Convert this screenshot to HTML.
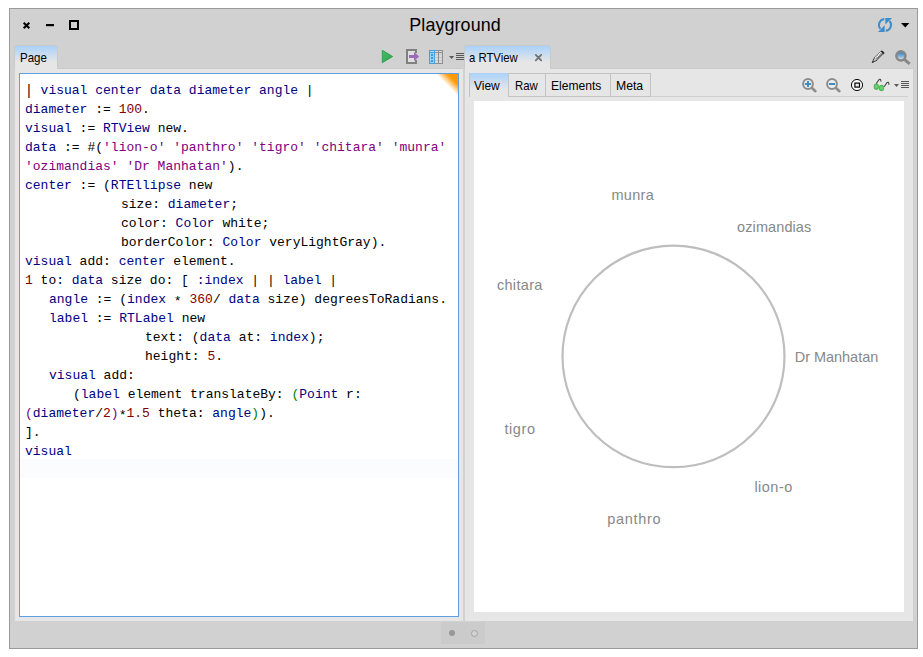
<!DOCTYPE html>
<html lang="en">
<head>
<meta charset="utf-8">
<title>Playground</title>
<style>
html,body{margin:0;padding:0;background:#fff;}
body{width:923px;height:657px;position:relative;overflow:hidden;font-family:"Liberation Sans",sans-serif;color:#000;}
.abs{position:absolute;}
#win{left:9px;top:8px;width:907px;height:639px;border:1px solid #9a9a9a;background:#d1d1d1;}
/* all children positioned in page coordinates via #stage */
#stage{position:absolute;left:0;top:0;width:923px;height:657px;}
.t{position:absolute;white-space:pre;line-height:1;transform-origin:0 0;}
#title{left:409.3px;top:14.5px;font-size:17.9px;line-height:20px;letter-spacing:0.1px;}
.tab{position:absolute;background:linear-gradient(#aad2fb 0%,#e6e6e6 70%);box-shadow:-1px 0 0 #c9c9c9,1px 0 0 #c9c9c9,0 -1px 0 #c9c9c9;}
.panel{position:absolute;background:#e6e6e6;}
.ui{font-size:13px;}
#editor{position:absolute;left:19px;top:73px;width:438px;height:542px;border:1px solid #5f9fdf;background:#fff;overflow:hidden;}
#code{position:absolute;left:5px;top:6.7px;margin:0;font-family:"Liberation Mono",monospace;font-size:13px;line-height:19px;white-space:pre;color:#000;}
#code div{height:19px;}
.tb{display:inline-block;width:24px;}
.v{color:#000080;}
.n{color:#800000;}
.s{color:#800080;}
.g{color:#008000;}
.m{color:#800080;}
.c0{color:#8a3a1c;}
.st{position:relative;top:2.5px;}
.itab{position:absolute;top:73px;height:24px;box-sizing:border-box;border:1px solid #c3c3c3;border-left:none;background:#e6e6e6;}
.lbl{position:absolute;font-size:14.5px;line-height:16px;color:#888888;white-space:pre;}
</style>
</head>
<body>
<div id="win" class="abs"></div>
<div id="stage">

<!-- title bar icons -->
<svg class="abs" style="left:20px;top:18px" width="64" height="16" viewBox="20 18 64 16">
  <path d="M23.7 22.7 L29.3 28.3 M29.3 22.7 L23.7 28.3" stroke="#000" stroke-width="2.1" stroke-linecap="butt" fill="none"/>
  <rect x="46" y="24" width="8" height="2.2" fill="#000"/>
  <rect x="70" y="21" width="8" height="8" fill="none" stroke="#000" stroke-width="2"/>
</svg>
<div id="title" class="t">Playground</div>

<!-- refresh + dropdown -->
<svg class="abs" style="left:874px;top:14px" width="40" height="22" viewBox="874 14 40 22">
  <g fill="none" stroke="#3d8ecb" stroke-width="2">
    <path d="M884.3 18.95 A6 6 0 0 0 880.4 28.8"/>
    <path d="M885.7 30.85 A6 6 0 0 0 889.6 21"/>
  </g>
  <path d="M878 31.9 L884.7 31.9 L884.7 25.2 Z" fill="#3d8ecb"/>
  <path d="M892 17.9 L885.3 17.9 L885.3 24.6 Z" fill="#3d8ecb"/>
  <path d="M901 23 L909.4 23 L905.2 27.4 Z" fill="#000"/>
</svg>

<!-- left tab + panel -->
<div class="tab" style="left:15px;top:46px;width:42px;height:23px;"></div>
<div class="t ui" id="tPage" style="left:20.3px;top:50.9px;transform:scaleX(0.885);">Page</div>
<div class="panel" style="left:15px;top:69px;width:448px;height:552px;"></div>
<div class="abs" style="left:58px;top:68px;width:405px;height:1px;background:#c9c9c9;"></div>

<!-- toolbar icons (left) -->
<svg class="abs" style="left:378px;top:46px" width="88" height="22" viewBox="378 46 88 22">
  <defs>
    <linearGradient id="gr" x1="0" y1="0" x2="1" y2="1"><stop offset="0" stop-color="#4cbb6a"/><stop offset="1" stop-color="#2aa548"/></linearGradient>
  </defs>
  <path d="M382.3 50.3 L392.6 56.5 L382.3 62.7 Z" fill="url(#gr)" stroke="#24a045" stroke-width="0.9" stroke-linejoin="round"/>
  <!-- export icon -->
  <rect x="408" y="51" width="7" height="11" fill="#dfdfdf"/>
  <path d="M416 53 L416 50 L407 50 L407 63 L416 63 L416 60" fill="none" stroke="#808080" stroke-width="2"/>
  <path d="M409 55 L414 55 L414 52 L419.2 56.5 L414 61 L414 58 L409 58 Z" fill="#9d6aba"/>
  <!-- table icon -->
  <g shape-rendering="crispEdges">
  <rect x="434" y="50" width="9" height="14" fill="#8e8e8e"/>
  <rect x="435" y="51" width="3" height="1" fill="#dedede"/>
  <rect x="439" y="51" width="3" height="1" fill="#dedede"/>
  <rect x="435" y="53" width="3" height="10" fill="#d9d9d9"/>
  <rect x="439" y="53" width="3" height="10" fill="#d9d9d9"/>
  <rect x="435" y="54" width="3" height="1" fill="#c6c6c6"/><rect x="439" y="54" width="3" height="1" fill="#c6c6c6"/>
  <rect x="435" y="57" width="3" height="1" fill="#c6c6c6"/><rect x="439" y="57" width="3" height="1" fill="#c6c6c6"/>
  <rect x="435" y="60" width="3" height="1" fill="#c6c6c6"/><rect x="439" y="60" width="3" height="1" fill="#c6c6c6"/>
  <rect x="429" y="50" width="6" height="14" fill="#4c9fd9"/>
  <rect x="430" y="51" width="4" height="1" fill="#a8dcff"/>
  <rect x="430" y="53" width="4" height="10" fill="#8fd2ff"/>
  <rect x="431" y="54" width="2" height="2" fill="#429ad5"/>
  <rect x="431" y="57" width="2" height="2" fill="#429ad5"/>
  <rect x="431" y="60" width="2" height="2" fill="#429ad5"/>
  </g>
  <!-- menu -->
  <path d="M449 56 L454.2 56 L451.6 59 Z" fill="#5a5a5a"/>
  <path d="M456 53.5 H464 M456 55.5 H464 M456 57.5 H464 M456 59.5 H464" stroke="#555" stroke-width="1" fill="none"/>
</svg>

<!-- right tab + panel -->
<div class="tab" style="left:465px;top:46px;width:85px;height:23px;"></div>
<div class="t ui" id="tRT" style="left:468.9px;top:50.9px;transform:scaleX(0.871);">a RTView</div>
<svg class="abs" style="left:533px;top:52px" width="12" height="12" viewBox="533 52 12 12">
  <path d="M535.8 54.9 L541.2 60.3 M541.2 54.9 L535.8 60.3" stroke="#6e6e6e" stroke-width="1.7" stroke-linecap="round" fill="none"/>
</svg>
<div class="panel" style="left:465px;top:69px;width:448px;height:552px;"></div>
<div class="abs" style="left:551px;top:68px;width:362px;height:1px;background:#c9c9c9;"></div>

<!-- pencil + search -->
<svg class="abs" style="left:868px;top:48px" width="46" height="20" viewBox="868 48 46 20">
  <defs>
    <linearGradient id="lens" x1="0" y1="0" x2="0" y2="1"><stop offset="0.15" stop-color="#3a8ac8"/><stop offset="0.5" stop-color="#76aeda"/><stop offset="0.85" stop-color="#d0d9e2"/></linearGradient>
  </defs>
  <path d="M874.6 57.2 L881.1 50.9 L883.9 53.8 L877.2 60.3 Z" fill="#6f6f6f"/>
  <path d="M875.35 58.0 L881.85 51.7" stroke="#fff" stroke-width="1.9" stroke-dasharray="1.3 0.5" fill="none"/>
  <path d="M874.6 57.2 L881.1 50.9" stroke="#555" stroke-width="0.5" fill="none"/>
  <path d="M880.6 51.4 L881.3 50.7 Q882 50.2 882.7 50.9 L884.1 52.3 Q884.7 53 884.2 53.6 L883.4 54.3 Z" fill="#2a2a2a"/>
  <path d="M874.7 57.3 L872.2 62.5 L877.1 60.2" fill="none" stroke="#3a3a3a" stroke-width="1" stroke-linejoin="miter"/>
  <path d="M872.1 62.7 L872.9 60.9 L873.9 61.9 Z" fill="#2a2a2a"/>
  <circle cx="900.9" cy="55.9" r="4.55" fill="url(#lens)" stroke="#878787" stroke-width="2.5"/>
  <path d="M904.9 59.8 L908.5 62.9" stroke="#878787" stroke-width="3" stroke-linecap="square"/>
</svg>

<!-- inner tabs -->
<div class="tab" style="left:469px;top:73px;width:40px;height:24px;box-sizing:border-box;border-left:1px solid #c3c3c3;border-right:1px solid #c3c3c3;box-shadow:none;"></div>
<div class="itab" style="left:509px;width:37px;"></div>
<div class="itab" style="left:546px;width:65px;"></div>
<div class="itab" style="left:611px;width:40px;"></div>
<div class="abs" style="left:651px;top:96px;width:257px;height:1px;background:#cfcfcf;"></div>
<div class="t ui" id="tView" style="left:473.6px;top:78.7px;transform:scaleX(0.92);">View</div>
<div class="t ui" id="tRaw" style="left:514.5px;top:78.7px;transform:scaleX(0.875);">Raw</div>
<div class="t ui" id="tEl" style="left:550.5px;top:78.7px;transform:scaleX(0.93);">Elements</div>
<div class="t ui" id="tMeta" style="left:615.6px;top:78.7px;transform:scaleX(0.94);">Meta</div>

<!-- right toolbar icons -->
<svg class="abs" style="left:798px;top:74px" width="114" height="22" viewBox="798 74 114 22">
  <defs><radialGradient id="lg" cx="0.5" cy="0.5" r="0.6"><stop offset="0" stop-color="#86da86"/><stop offset="1" stop-color="#44b84a"/></radialGradient></defs>
  <circle cx="808" cy="84" r="4.9" fill="#ececec" stroke="#8c8c8c" stroke-width="2"/>
  <path d="M812 88 L815.4 91.2" stroke="#8c8c8c" stroke-width="2.6" stroke-linecap="round"/>
  <path d="M805 84 H811 M808 81 V87" stroke="#3b8cc8" stroke-width="2" fill="none"/>
  <circle cx="832" cy="84" r="4.9" fill="#ececec" stroke="#8c8c8c" stroke-width="2"/>
  <path d="M836 88 L839.4 91.2" stroke="#8c8c8c" stroke-width="2.6" stroke-linecap="round"/>
  <path d="M829 84 H835" stroke="#3b8cc8" stroke-width="2" fill="none"/>
  <circle cx="857" cy="85" r="5.55" fill="#fff" stroke="#000" stroke-width="1"/>
  <rect x="854.9" y="83.1" width="4.6" height="4" fill="#eeeeee" stroke="#000" stroke-width="1.2"/>
  <!-- glasses -->
  <path d="M876.2 83.8 L878.5 80.2 Q879.3 79 880.2 79.3 Q881 79.7 880.9 81.6" stroke="#404040" stroke-width="1.1" fill="none"/>
  <path d="M884.2 86.8 L886.5 83.2 Q887.3 82 888.2 82.3 Q889 82.7 888.9 84.7" stroke="#404040" stroke-width="1.1" fill="none"/>
  <rect x="874.2" y="84" width="4.2" height="5.4" rx="1.6" fill="url(#lg)" stroke="#3aa940" stroke-width="0.7"/>
  <rect x="879.4" y="85.3" width="4.2" height="5.4" rx="1.6" fill="url(#lg)" stroke="#3aa940" stroke-width="0.7"/>
  <path d="M894 84 L899 84 L896.5 87 Z" fill="#5a5a5a"/>
  <path d="M901 81.5 H909 M901 83.5 H909 M901 85.5 H909 M901 87.5 H909" stroke="#555" stroke-width="1" fill="none"/>
</svg>

<!-- canvas -->
<div class="abs" style="left:474px;top:101px;width:430px;height:511px;background:#fff;"></div>
<svg class="abs" style="left:474px;top:101px" width="430" height="511" viewBox="474 101 430 511">
  <ellipse cx="673.5" cy="356.4" rx="111" ry="110.8" fill="#fff" stroke="#bebebe" stroke-width="2.2"/>
</svg>
<div class="lbl" id="l1" style="left:611.40px;top:187px;letter-spacing:0.33px;">munra</div>
<div class="lbl" id="l2" style="left:737.10px;top:219px;letter-spacing:0.09px;">ozimandias</div>
<div class="lbl" id="l3" style="left:496.90px;top:277px;letter-spacing:0.33px;">chitara</div>
<div class="lbl" id="l4" style="left:794.80px;top:349px;letter-spacing:-0.04px;">Dr Manhatan</div>
<div class="lbl" id="l5" style="left:504.40px;top:421px;letter-spacing:0.6px;">tigro</div>
<div class="lbl" id="l6" style="left:754.40px;top:479px;letter-spacing:0.48px;">lion-o</div>
<div class="lbl" id="l7" style="left:607.25px;top:511px;letter-spacing:0.68px;">panthro</div>

<!-- editor -->
<div id="editor">
<div class="abs" style="left:0;top:385px;width:438px;height:19px;background:#fbfcfe;"></div>
<div id="code"><div><span class="c0">|</span><span class="v"> visual center data diameter angle</span> |</div><div><span class="v">diameter</span> := <span class="n">100</span>.</div><div><span class="v">visual</span> := <span class="v">RTView</span> new.</div><div><span class="v">data</span> := #(<span class="s">'lion-o' 'panthro' 'tigro' 'chitara' 'munra'</span></div><div><span class="s">'ozimandias' 'Dr Manhatan'</span>).</div><div><span class="v">center</span> := (<span class="v">RTEllipse</span> new</div><div><span class="tb"></span><span class="tb"></span><span class="tb"></span><span class="tb"></span>size: <span class="v">diameter</span>;</div><div><span class="tb"></span><span class="tb"></span><span class="tb"></span><span class="tb"></span>color: <span class="v">Color</span> white;</div><div><span class="tb"></span><span class="tb"></span><span class="tb"></span><span class="tb"></span>borderColor: <span class="v">Color</span> veryLightGray).</div><div><span class="v">visual</span> add: <span class="v">center</span> element.</div><div><span class="n">1</span> to: <span class="v">data</span> size do: [ <span class="v">:index</span> | | <span class="v">label</span> |</div><div><span class="tb"></span><span class="v">angle</span> := (<span class="v">index</span> <span class="st">*</span> <span class="n">360</span>/ <span class="v">data</span> size) degreesToRadians.</div><div><span class="tb"></span><span class="v">label</span> := <span class="v">RTLabel</span> new</div><div><span class="tb"></span><span class="tb"></span><span class="tb"></span><span class="tb"></span><span class="tb"></span>text: (<span class="v">data</span> at: <span class="v">index</span>);</div><div><span class="tb"></span><span class="tb"></span><span class="tb"></span><span class="tb"></span><span class="tb"></span>height: <span class="n">5</span>.</div><div><span class="tb"></span><span class="v">visual</span> add:</div><div><span class="tb"></span><span class="tb"></span>(<span class="v">label</span> element translateBy: <span class="g">(</span><span class="v">Point</span> r:</div><div><span class="m">(</span><span class="v">diameter</span>/<span class="n">2</span><span class="m">)</span><span class="st">*</span><span class="n">1.5</span> theta: <span class="v">angle</span><span class="g">)</span>).</div><div>].</div><div><span class="v">visual</span></div></div>
<div class="abs" style="left:8px;top:10px;width:1px;height:14px;background:#b4562c;"></div><div class="abs" style="left:9px;top:10px;width:1px;height:14px;background:#2e8ee6;"></div>
<div class="abs" style="right:0;top:0;width:24px;height:24px;background:linear-gradient(to bottom left,#ff9900 0%,#ff9900 22%,rgba(255,153,0,0) 46%);"></div>
</div>

<!-- pager -->
<div class="abs" style="left:441px;top:622px;width:44px;height:22px;background:#cbcbcb;"></div>
<svg class="abs" style="left:441px;top:622px" width="44" height="22" viewBox="441 622 44 22">
  <circle cx="452" cy="633" r="3" fill="#989898"/>
  <circle cx="474.5" cy="633.5" r="3" fill="#d2d2d2" stroke="#a4a4a4" stroke-width="1"/>
</svg>

</div>
</body>
</html>
